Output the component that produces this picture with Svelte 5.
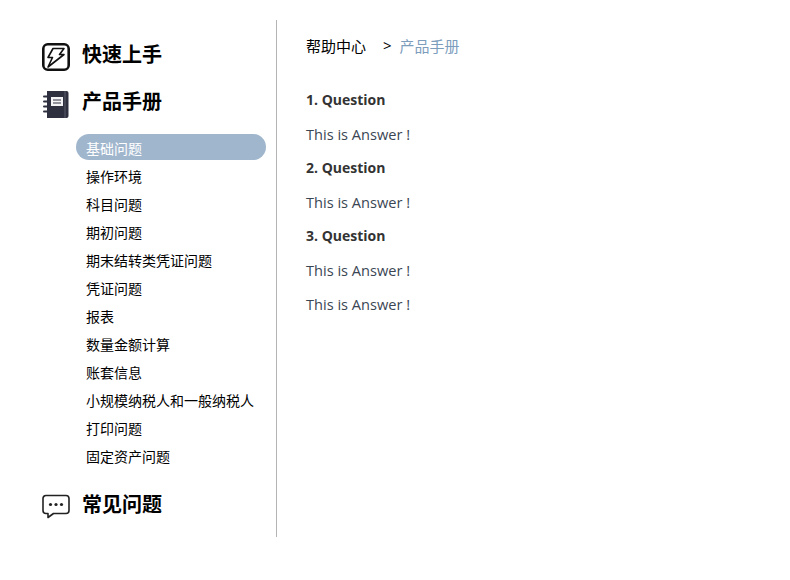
<script lang="ts">
  const menu = [
    '基础问题',
    '操作环境',
    '科目问题',
    '期初问题',
    '期末结转类凭证问题',
    '凭证问题',
    '报表',
    '数量金额计算',
    '账套信息',
    '小规模纳税人和一般纳税人',
    '打印问题',
    '固定资产问题'
  ];
  const qa = [
    { q: '1. Question', a: ['This is Answer !'] },
    { q: '2. Question', a: ['This is Answer !'] },
    { q: '3. Question', a: ['This is Answer !', 'This is Answer !'] }
  ];
</script>

<div class="page">
  <aside class="side">
    <div class="head first">
      <svg class="icon" viewBox="0 0 28 28" aria-hidden="true">
        <rect x="1.3" y="1.3" width="25.4" height="25.4" rx="4.5" fill="none" stroke="#111" stroke-width="2.6" />
        <path d="M11 5.5h11l-4.5 6h4.5L6 24l4.5-9.5H6z" fill="none" stroke="#111" stroke-width="1.6" stroke-linejoin="round" />
      </svg>
      <h2>快速上手</h2>
    </div>
    <div class="head">
      <svg class="icon" viewBox="0 0 28 28" aria-hidden="true">
        <path d="M5 1h19.5a2 2 0 0 1 2 2v23a2 2 0 0 1-2 2H5z" fill="#2e3040" />
        <path d="M23 1v27" stroke="#5a5c6c" stroke-width="1" />
        <rect x="9" y="7" width="12" height="9" fill="#f4f4f6" />
        <path d="M11 10h8M11 13h8" stroke="#2e3040" stroke-width="1.2" />
        <path d="M2 6.5h4.5M2 11.5h4.5M2 16.5h4.5M2 21.5h4.5" stroke="#2e3040" stroke-width="2" stroke-linecap="round" />
      </svg>
      <h2>产品手册</h2>
    </div>
    <ul class="menu">
      {#each menu as item, i}
        <li class:active={i === 0}>{item}</li>
      {/each}
    </ul>
    <div class="head last">
      <svg class="icon" viewBox="0 0 28 28" aria-hidden="true">
        <path d="M4 3.5h20a3 3 0 0 1 3 3v12a3 3 0 0 1-3 3H11.5l-5.5 4v-4H4a3 3 0 0 1-3-3v-12a3 3 0 0 1 3-3z" fill="none" stroke="#222" stroke-width="1.6" stroke-linejoin="round" />
        <circle cx="8.5" cy="12.5" r="1.6" fill="#222" />
        <circle cx="14" cy="12.5" r="1.6" fill="#222" />
        <circle cx="19.5" cy="12.5" r="1.6" fill="#222" />
      </svg>
      <h2>常见问题</h2>
    </div>
  </aside>

  <main class="main">
    <nav class="crumb">
      <span>帮助中心</span>
      <span class="sep">&gt;</span>
      <span class="cur">产品手册</span>
    </nav>
    <div class="list">
      {#each qa as row}
        <p class="q">{row.q}</p>
        {#each row.a as ans}
          <p class="a">{ans}</p>
        {/each}
      {/each}
    </div>
  </main>
</div>

<style>
  :global(body) {
    background: #fff;
    font-family: "Open Sans", "Noto Sans CJK SC", sans-serif;
  }
  .page {
    display: flex;
    align-items: flex-start;
    padding: 20px 0 0;
    height: 517px;
  }
  .side {
    box-sizing: border-box;
    width: 277px;
    height: 517px;
    border-right: 1px solid #b4b4b4;
    padding: 11px 10px 0 42px;
    flex-shrink: 0;
  }
  .head {
    display: flex;
    align-items: center;
    gap: 12px;
    height: 48px;
  }
  .head.first {
    margin-bottom: -1px;
  }
  .icon {
    width: 28px;
    height: 28px;
    flex-shrink: 0;
    margin-top: 3px;
  }
  .head.last .icon {
    margin-top: 1px;
  }
  h2 {
    margin: 0;
    font-size: 20px;
    font-weight: 700;
    color: #000;
    line-height: 28px;
  }
  .menu {
    list-style: none;
    margin: 8px 0 0 34px;
    padding: 0;
  }
  .menu li {
    height: 28px;
    line-height: 30px;
    padding-left: 10px;
    font-size: 14px;
    color: #000;
    white-space: nowrap;
  }
  .menu li.active {
    height: 26px;
    margin-bottom: 2px;
    border-radius: 13px;
    background: #a0b6cd;
    color: #fff;
  }
  .head.last {
    margin-top: 11px;
  }
  .main {
    padding: 0 0 0 29px;
  }
  .crumb {
    display: flex;
    align-items: center;
    height: 20px;
    margin-top: 15px;
    font-size: 15px;
    color: #000;
  }
  .sep {
    margin: 0 8px 0 17px;
  }
  .cur {
    color: #7d9dbd;
  }
  .list {
    margin-top: 28px;
  }
  .q,
  .a {
    margin: 0;
    height: 34px;
    line-height: 34px;
  }
  .q {
    font-size: 14px;
    font-weight: 700;
    color: #333;
  }
  .a {
    font-size: 14.6px;
    color: #3a4654;
  }
</style>
